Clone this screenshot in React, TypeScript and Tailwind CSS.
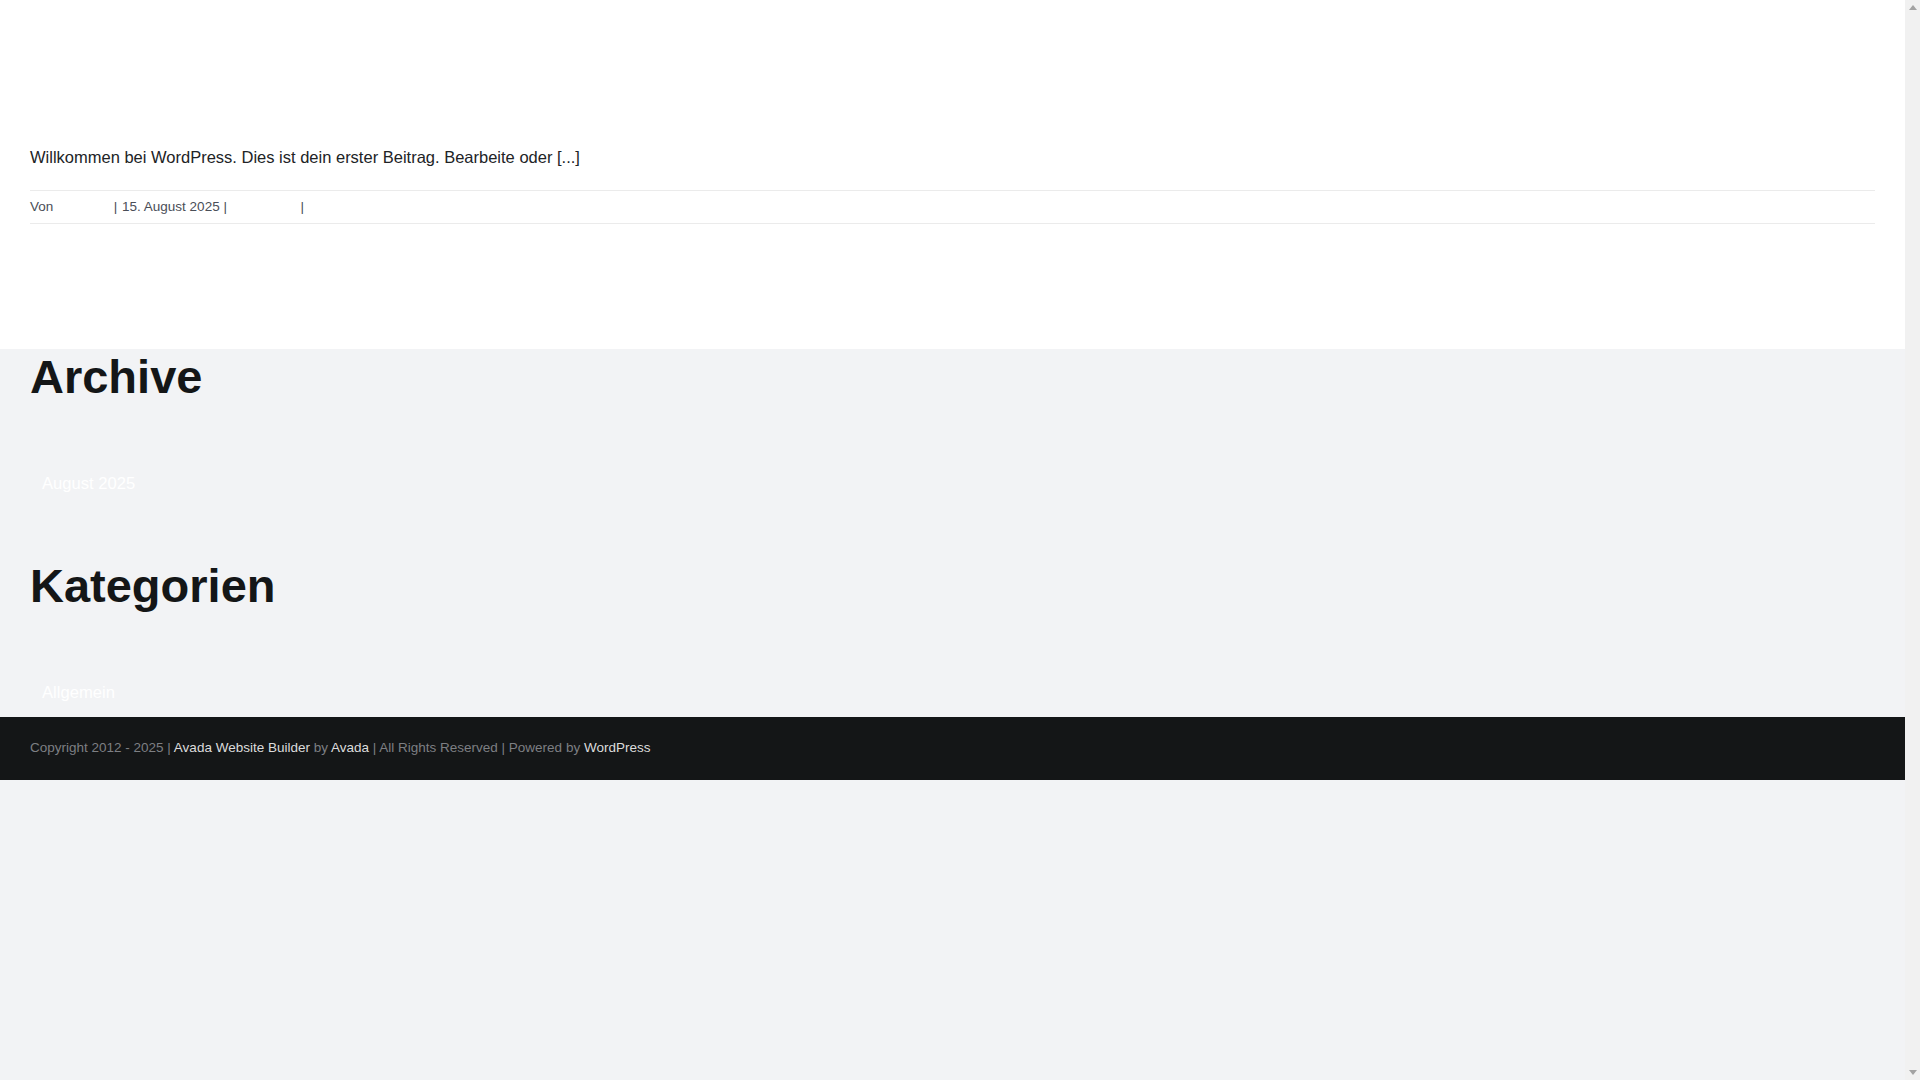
import React from "react";

function Scrollbar() {
  return (
    <div className="w-[15px] shrink-0 h-screen bg-[#f1f1f1] flex flex-col justify-between">
      <div className="h-[15px] flex items-center justify-center">
        <svg width="8" height="5" viewBox="0 0 8 5">
          <polygon points="4,0 8,5 0,5" fill="#a3a3a3" />
        </svg>
      </div>
      <div className="h-[15px] flex items-center justify-center">
        <svg width="8" height="5" viewBox="0 0 8 5">
          <polygon points="0,0 8,0 4,5" fill="#a3a3a3" />
        </svg>
      </div>
    </div>
  );
}

export default function App() {
  return (
    <div className="h-screen flex overflow-hidden bg-[#f2f3f5] font-['Liberation_Sans',Arial,sans-serif]">
      <main className="flex-1 min-w-0">
        <section className="bg-white px-[30px] pt-[145px] pb-[125px]">
          <p className="text-[16.5px] leading-6 text-[#212326]">
            Willkommen bei WordPress. Dies ist dein erster Beitrag. Bearbeite oder [...]
          </p>
          <div className="mt-[21px] border-y border-[#ebebeb] text-[13.5px] leading-[32px] text-[#4a4e57]">
            Von <span className="inline-block w-[53px]"></span> |{" "}
            <span className="ml-[1px]">15. August 2025</span> |{" "}
            <span className="inline-block w-[66px]"></span> |
          </div>
        </section>

        <section className="px-[30px] flex flex-col gap-[50px]">
          <div>
            <h2 className="text-[47px] font-bold leading-[1.2] text-[#141617]">Archive</h2>
            <ul className="pt-[67px] pb-[12px]">
              <li className="pl-[12px] text-[16.6px] leading-6 text-white">August 2025</li>
            </ul>
          </div>
          <div>
            <h2 className="text-[47px] font-bold leading-[1.2] text-[#141617]">Kategorien</h2>
            <ul className="pt-[66px] pb-[12px]">
              <li className="pl-[12px] text-[16.6px] leading-6 text-white">Allgemein</li>
            </ul>
          </div>
        </section>

        <footer className="bg-[#141617] px-[30px] h-[63px] flex items-center text-[13.5px] text-[#7d7f83]">
          <p>
            Copyright 2012 - 2025 | <span className="text-[#dcdcdc]">Avada Website Builder</span> by{" "}
            <span className="text-[#dcdcdc]">Avada</span> | All Rights Reserved | Powered by{" "}
            <span className="text-[#dcdcdc]">WordPress</span>
          </p>
        </footer>
      </main>
      <Scrollbar />
    </div>
  );
}
